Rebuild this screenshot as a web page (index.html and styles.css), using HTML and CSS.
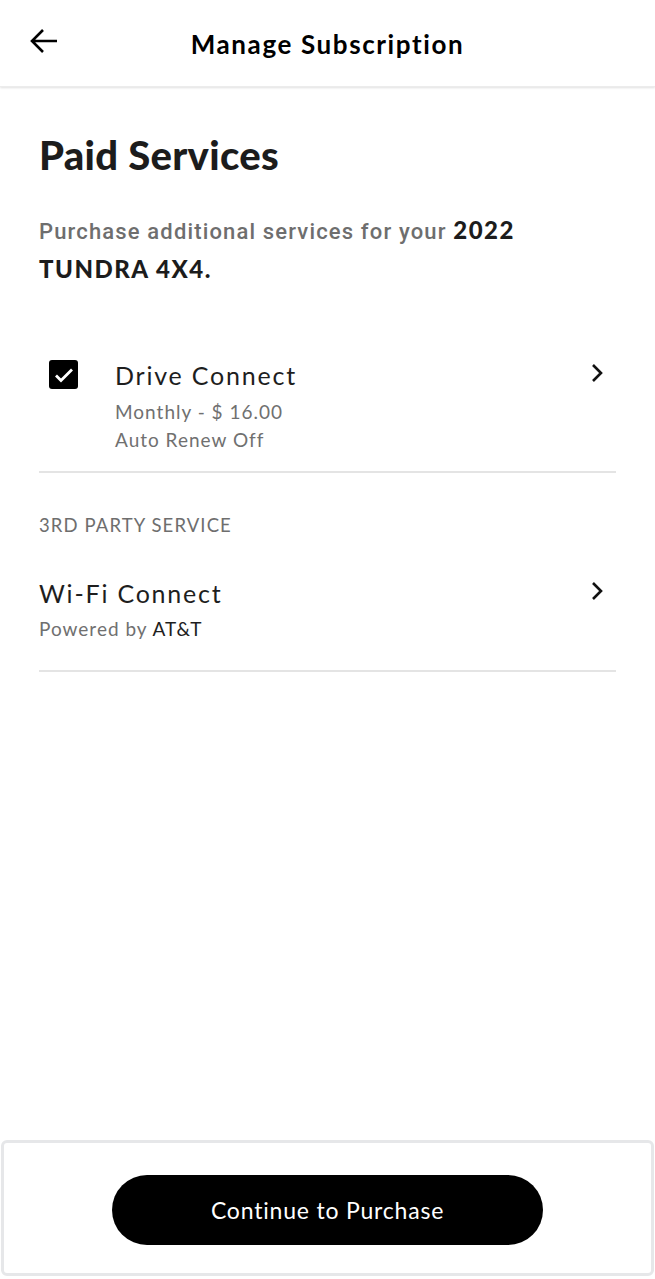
FILE: index.html
```html
<!DOCTYPE html>
<html>
<head>
<meta charset="utf-8">
<link rel="stylesheet" href="styles.css">
</head>
<body>
<div class="app">
  <header class="topbar">
    <button class="back" aria-label="Back">
      <svg width="28" height="26" viewBox="0 0 28 26"><path d="M27 13H3M13 2L2 13l11 11" fill="none" stroke="#000" stroke-width="2.6"/></svg>
    </button>
    <h1 class="topbar-title">Manage Subscription</h1>
  </header>

  <main class="content">
    <h2 class="page-title">Paid Services</h2>
    <p class="intro">Purchase additional services for your <b>2022</b> <b>TUNDRA 4X4.</b></p>

    <div class="service-row checked-row">
      <span class="checkbox">
        <svg width="22" height="18" viewBox="0 0 22 18"><path d="M3 9.5l5 5L19 3.5" fill="none" stroke="#fff" stroke-width="2.8"/></svg>
      </span>
      <div class="service-info">
        <div class="service-name">Drive Connect</div>
        <div class="service-meta">Monthly - $ 16.00</div>
        <div class="service-meta">Auto Renew Off</div>
      </div>
      <svg class="chevron" width="14" height="20" viewBox="0 0 14 20"><path d="M3 2l8 8-8 8" fill="none" stroke="#111" stroke-width="2.6"/></svg>
    </div>

    <div class="section-label">3RD PARTY SERVICE</div>

    <div class="service-row third-row">
      <div class="service-info">
        <div class="service-name">Wi-Fi Connect</div>
        <div class="service-meta powered">Powered by <span class="att">AT&amp;T</span></div>
      </div>
      <svg class="chevron" width="14" height="20" viewBox="0 0 14 20"><path d="M3 2l8 8-8 8" fill="none" stroke="#111" stroke-width="2.6"/></svg>
    </div>
  </main>

  <footer class="footer">
    <button class="cta">Continue to Purchase</button>
  </footer>
</div>
</body>
</html>
```

FILE: styles.css
```css
* { box-sizing: border-box; }
html, body { margin: 0; padding: 0; background: #fff; }
body { font-family: "Noto Sans", "Open Sans", sans-serif; color: #1a1a1a; }

.app {
  width: 655px;
  height: 1279px;
  display: flex;
  flex-direction: column;
}

.topbar {
  height: 87px;
  flex: none;
  position: relative;
  display: flex;
  align-items: center;
  justify-content: center;
  box-shadow: 0 1px 2px rgba(0,0,0,0.12);
  border-bottom: 1px solid #ececec;
}
.back {
  position: absolute;
  left: 30px;
  top: 28px;
  padding: 0;
  border: 0;
  background: none;
  display: flex;
}
.topbar-title {
  margin: 0;
  font-family: "Lato", "Noto Sans", sans-serif;
  font-weight: 700;
  font-size: 26px;
  letter-spacing: 1.6px;
  color: #000;
  padding-top: 1px;
}

.content {
  flex: 1;
  padding: 0 39px;
}
.page-title {
  margin: 45px 0 0;
  font-family: "Lato", "Noto Sans", sans-serif;
  font-weight: 900;
  font-size: 40px;
  line-height: 46px;
  letter-spacing: 0.3px;
  color: #1c1c1c;
}
.intro {
  margin: 33px 0 0;
  font-family: "Roboto", sans-serif;
  font-weight: 500;
  font-size: 22px;
  line-height: 37px;
  letter-spacing: 1.15px;
  color: #6e6e6e;
  max-width: 500px;
}
.intro b {
  font-family: "Lato", sans-serif;
  font-weight: 900;
  font-size: 24px;
  color: #1c1c1c;
  letter-spacing: 1.5px;
}

.service-row {
  display: flex;
  align-items: flex-start;
  border-bottom: 2px solid #e4e4e4;
}
.checked-row {
  margin-top: 64px;
  padding: 0 0 17px 10px;
}
.checkbox {
  width: 29px;
  height: 29px;
  border-radius: 3px;
  background: #000;
  display: flex;
  align-items: center;
  justify-content: center;
  margin-top: 7px;
  margin-right: 37px;
  flex: none;
}
.service-info { flex: 1; }
.service-name {
  font-family: "Lato", "Noto Sans", sans-serif;
  font-size: 25px;
  line-height: 34px;
  letter-spacing: 1.8px;
  color: #1e1e1e;
  margin-top: 5px;
}
.service-meta {
  font-family: "Lato", "Noto Sans", sans-serif;
  font-size: 19px;
  line-height: 28px;
  letter-spacing: 1px;
  color: #707070;
}
.checked-row .service-name { margin-bottom: 6px; }
.chevron {
  flex: none;
  margin-top: 10px;
  margin-right: 12px;
}

.section-label {
  margin-top: 41px;
  font-family: "Lato", "Noto Sans", sans-serif;
  font-size: 18.5px;
  letter-spacing: 1.1px;
  color: #6e6e6e;
  line-height: 22px;
}

.third-row {
  margin-top: 40px;
  padding-bottom: 27px;
}
.third-row .service-name { margin-top: 0; margin-bottom: 5px; }
.third-row .chevron { margin-top: 5px; }
.powered .att { color: #1e1e1e; }

.footer {
  flex: none;
  height: 136px;
  margin: 0 1px 3px;
  border: 3px solid #e6e7e9;
  border-radius: 6px;
  display: flex;
  align-items: center;
  justify-content: center;
  padding-top: 4px;
}
.cta {
  width: 431px;
  height: 70px;
  border: 0;
  border-radius: 35px;
  background: #000;
  color: #fff;
  font-family: "Lato", "Noto Sans", sans-serif;
  font-size: 23px;
  letter-spacing: 0.8px;
  cursor: pointer;
}
```
